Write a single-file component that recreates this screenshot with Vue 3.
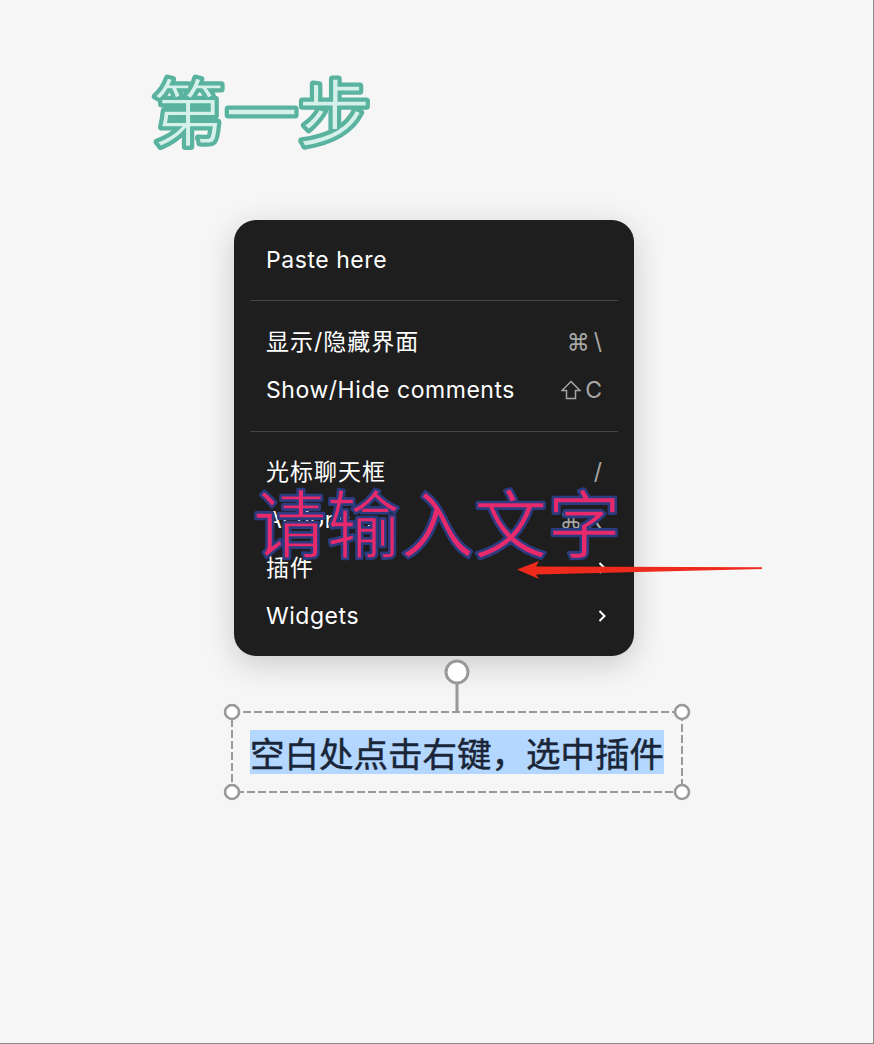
<script setup>
const sections = [
  [{ label: 'Paste here' }],
  [
    { label: '显示/隐藏界面', cjk: true, keys: ['⌘', '\\'] },
    { label: 'Show/Hide comments', keys: ['C'], shift: true },
  ],
  [
    { label: '光标聊天框', cjk: true, keys: ['/'] },
    { label: 'Actions...', keys: ['⌘', 'K'] },
    { label: '插件', cjk: true, chevron: true },
    { label: 'Widgets', chevron: true },
  ],
]
const handles = [[232, 712], [682, 712], [232, 792], [682, 792]]
</script>

<template>
  <div class="page">
    <div class="menu">
      <section v-for="(items, i) in sections" :key="i" class="section">
        <div v-for="item in items" :key="item.label" class="row" :class="{ cjk: item.cjk }">
          <span class="label">{{ item.label }}</span>
          <span v-if="item.keys" class="keys">
            <svg v-if="item.shift" class="shift" viewBox="0 0 20 20" width="20" height="20">
              <path d="M10 1.5 L19 10.5 H14.5 V18.5 H5.5 V10.5 H1 Z" fill="none" stroke="currentColor" stroke-width="1.5" />
            </svg>
            <span v-for="k in item.keys" :key="k">{{ k }}</span>
          </span>
          <svg v-if="item.chevron" class="chevron" viewBox="0 0 10 14" width="10" height="14">
            <path d="M2.5 2 L7.5 7 L2.5 12" fill="none" stroke="#fff" stroke-width="2" />
          </svg>
        </div>
      </section>
    </div>

    <svg class="canvas" viewBox="0 0 874 1044" width="874" height="1044">
      <defs>
        <text id="title-text" class="title" x="152" y="140">第一步</text>
        <text id="overlay-text" class="overlay" x="253" y="552">请输入文字</text>
      </defs>
      <use href="#title-text" class="title-back" />
      <use href="#title-text" class="title-front" />
      <rect x="232" y="712" width="450" height="80" fill="none" stroke="#999" stroke-width="2" stroke-dasharray="8 3" />
      <line x1="457" y1="683" x2="457" y2="712" stroke="#999" stroke-width="3" />
      <circle cx="457" cy="672" r="11" fill="#fff" stroke="#999" stroke-width="3" />
      <circle v-for="h in handles" :key="h.join()" :cx="h[0]" :cy="h[1]" r="7" fill="#fff" stroke="#999" stroke-width="2.6" />
      <use href="#overlay-text" class="overlay-back" />
      <use href="#overlay-text" class="overlay-front" />
      <polygon points="517,569.5 539,561 536,566.5 762,567.3 762,569 536,574.5 539,579" fill="#ee2a1c" />
    </svg>

    <div class="caption"><span>空白处点击右键，选中插件</span></div>
  </div>
</template>

<style scoped>
.page {
  position: relative;
  box-sizing: border-box;
  width: 874px;
  height: 1044px;
  padding: 220px 0 0 234px;
  overflow: hidden;
  background: #f6f6f6;
  border-right: 1px solid #8a8a8a;
  border-bottom: 1px solid #8a8a8a;
  font-family: Inter, "Noto Sans CJK SC", sans-serif;
}
.menu {
  box-sizing: border-box;
  width: 400px;
  height: 436px;
  padding: 0 16px;
  border-radius: 22px;
  background: #1e1e1e;
  color: #fff;
  font-size: 23px;
  letter-spacing: 0.55px;
  box-shadow: 0 8px 32px rgba(0, 0, 0, 0.18);
}
.section {
  padding: 16px 0;
  border-bottom: 1px solid #444;
}
.section:last-child {
  border-bottom: 0;
}
.section:nth-child(2) {
  padding: 17px 0;
}
.row {
  display: flex;
  align-items: center;
  justify-content: space-between;
  box-sizing: border-box;
  height: 48px;
  padding: 0 16px;
}
.cjk .label {
  letter-spacing: 1px;
  padding-bottom: 4px;
}
.keys {
  display: flex;
  align-items: center;
  gap: 4px;
  color: #a6a6a6;
  letter-spacing: 0;
}
.chevron {
  margin-right: -5px;
}
.canvas {
  position: absolute;
  left: 0;
  top: 0;
  pointer-events: none;
}
.title {
  font: 400 73px "Noto Sans CJK SC", sans-serif;
}
.title-back {
  fill: #5ab39e;
  stroke: #5ab39e;
  stroke-width: 7px;
  stroke-linejoin: round;
}
.title-front {
  fill: #d6f1ea;
  stroke: #5ab39e;
  stroke-width: 1.4px;
}
.overlay {
  font: 400 73.6px "Noto Sans CJK SC", sans-serif;
}
.overlay-back {
  fill: #2b3c80;
  stroke: #2b3c80;
  stroke-width: 3.8px;
  stroke-linejoin: round;
}
.overlay-front {
  fill: #e62a6c;
  stroke: #2b3c80;
  stroke-width: 1.3px;
}
.caption {
  position: absolute;
  left: 250px;
  top: 730px;
  font: 400 34.5px/44px "Noto Sans CJK SC", sans-serif;
  color: #1a2638;
  -webkit-text-stroke: 0.5px #1a2638;
}
.caption span {
  display: block;
  width: 414px;
  white-space: nowrap;
  background: #b3d7ff;
}
</style>
